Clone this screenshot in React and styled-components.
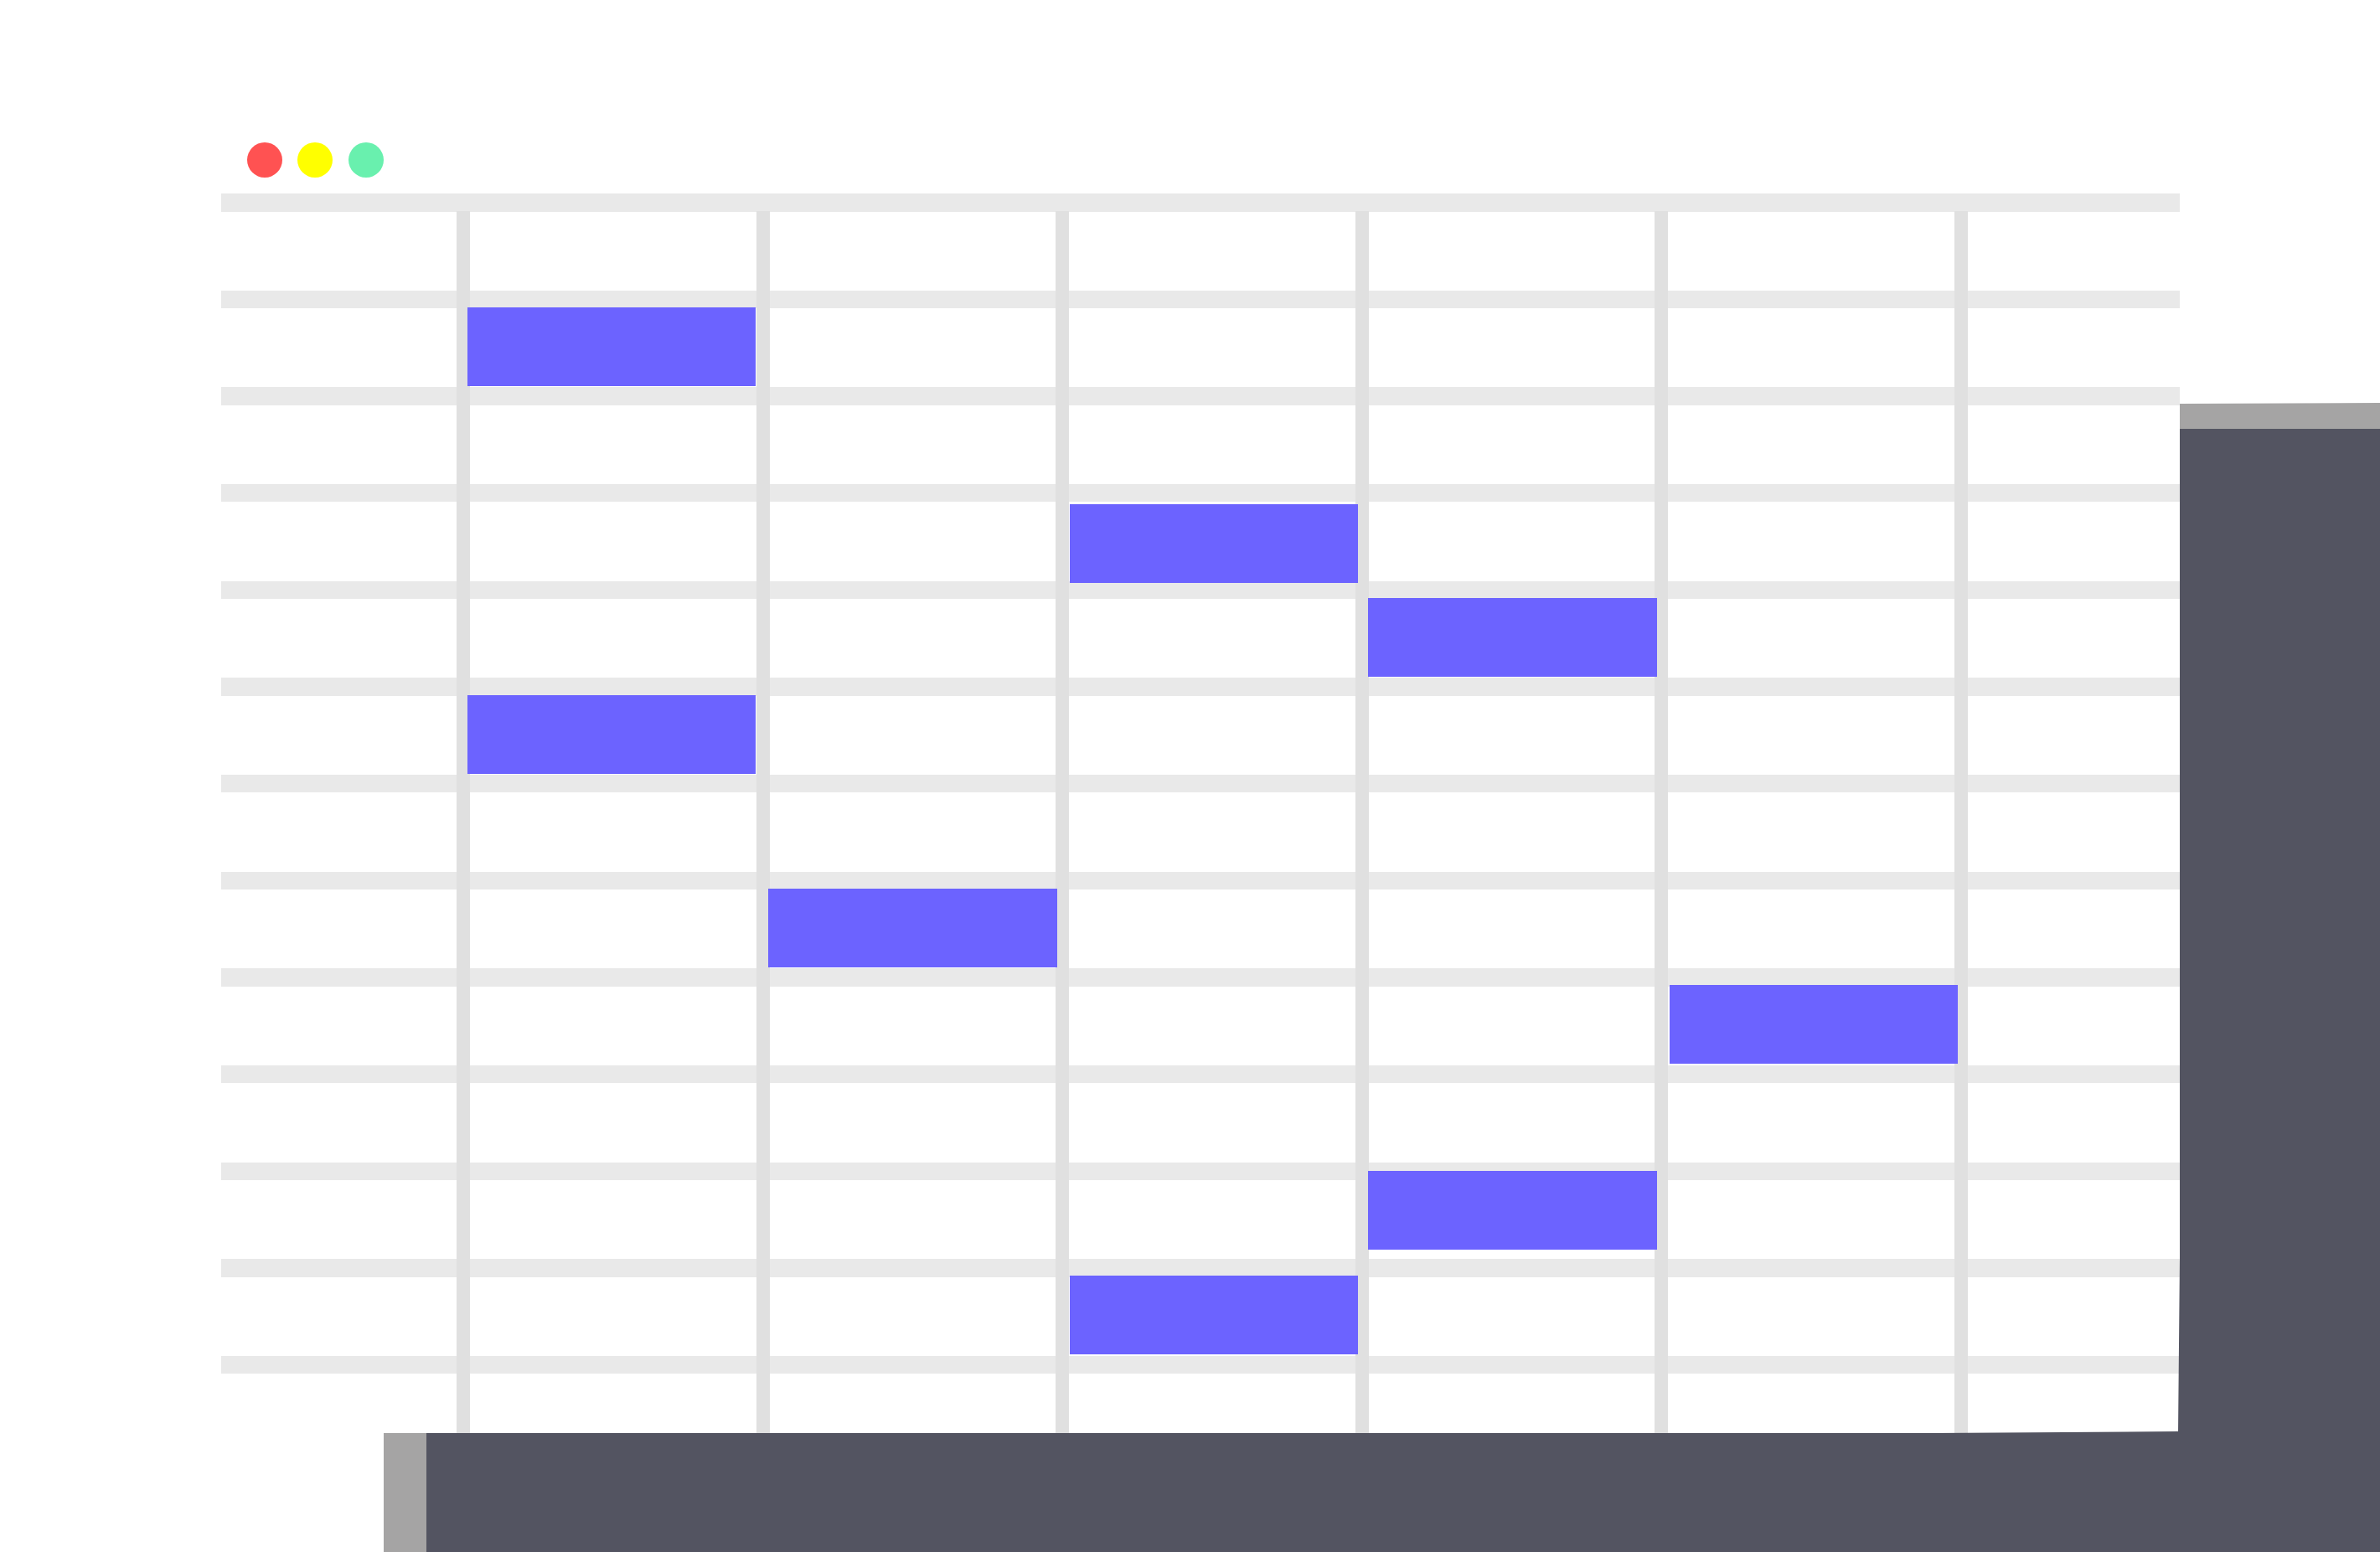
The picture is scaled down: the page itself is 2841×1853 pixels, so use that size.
import styled, { createGlobalStyle } from "styled-components"

const GlobalStyle = createGlobalStyle`
  html, body {
    margin: 0;
    background: #fff;
  }
`

// row pitch is 1388px over the 12 gaps, hence the fractional gap
const RULE_COUNT = 13
const COLUMN_COUNT = 6

const tasks = [
  { x: 293.6, y: 136 },
  { x: 1012.7, y: 371 },
  { x: 1369.4, y: 483 },
  { x: 293.6, y: 599 },
  { x: 653, y: 830 },
  { x: 1728.8, y: 945 },
  { x: 1369.4, y: 1167 },
  { x: 1012.7, y: 1292 },
]

export default function App() {
  return (
    <>
      <GlobalStyle />
      <Page>
        <TopRow>
          <Window>
            <Dots>
              <Dot $color="#ff5252" />
              <Dot $color="#ffff00" />
              <Dot $color="#69f0ae" />
            </Dots>
            <Chart>
              <Rules>
                {Array.from({ length: RULE_COUNT }, (_, i) => (
                  <Rule key={i} />
                ))}
              </Rules>
              <Columns>
                {Array.from({ length: COLUMN_COUNT }, (_, i) => (
                  <ColumnLine key={i} />
                ))}
              </Columns>
              {tasks.map((t) => (
                <Task key={`${t.x}-${t.y}`} $x={t.x} $y={t.y} />
              ))}
            </Chart>
          </Window>
          <SidePanel>
            <PanelCap />
            <PanelBody />
          </SidePanel>
        </TopRow>
        <BottomRow>
          <BaseTab />
          <Base />
        </BottomRow>
      </Page>
    </>
  )
}

const Page = styled.div`
  width: 2841px;
  height: 1853px;
  overflow: hidden;
  background: #fff;
  display: flex;
  flex-direction: column;
`

const TopRow = styled.div`
  height: 1711px;
  display: flex;
`

const Window = styled.div`
  width: 2602px;
  box-sizing: border-box;
  padding: 170px 0 0 264px;
  display: flex;
  flex-direction: column;
  gap: 19px;
`

const Dots = styled.div`
  display: flex;
  gap: 18.4px;
  padding-left: 31px;
`

const Dot = styled.span`
  width: 42px;
  height: 42px;
  border-radius: 50%;
  background: ${(p) => p.$color};
`

const Chart = styled.div`
  position: relative;
  flex: 1;
`

const Rules = styled.div`
  display: flex;
  flex-direction: column;
  gap: 94.17px;
`

const Rule = styled.div`
  height: 21.5px;
  background: #e9e9e9;
`

const Columns = styled.div`
  position: absolute;
  top: 21px;
  bottom: 0;
  left: 281px;
  display: flex;
  gap: 341.5px;
`

const ColumnLine = styled.div`
  width: 16px;
  background: #e0e0e0;
`

const Task = styled.div`
  position: absolute;
  left: ${(p) => p.$x}px;
  top: ${(p) => p.$y}px;
  width: 344.5px;
  height: 94px;
  background: #6c63ff;
`

const SidePanel = styled.div`
  flex: 1;
  margin: 481px 0 0 -2px;
  display: flex;
  flex-direction: column;
  clip-path: polygon(2px 1px, 100% 0, 100% 100%, 0 100%, 2px 1020px);
`

const PanelCap = styled.div`
  height: 31px;
  background: #a5a4a4;
`

const PanelBody = styled.div`
  flex: 1;
  background: #535461;
`

const BottomRow = styled.div`
  flex: 1;
  display: flex;
  padding-left: 458px;
`

const BaseTab = styled.div`
  width: 51px;
  background: #a5a4a4;
`

const Base = styled.div`
  flex: 1;
  margin-top: -2px;
  background: #535461;
  clip-path: polygon(0 2px, 1800px 2px, 2092px 0, 100% 0, 100% 100%, 0 100%);
`
